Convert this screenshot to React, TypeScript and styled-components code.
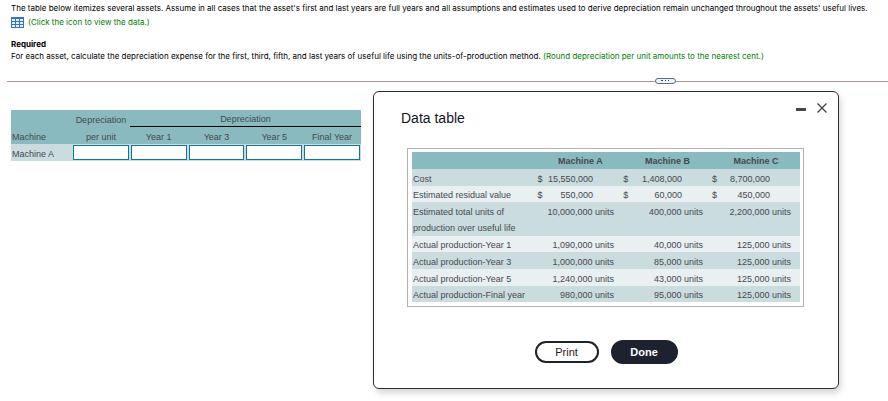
import React from "react";
import styled, { createGlobalStyle } from "styled-components";

const GlobalStyle = createGlobalStyle`
  * { box-sizing: border-box; }
  body {
    margin: 0;
    background: #fff;
    color: #000;
    font-family: "Liberation Sans", Arial, sans-serif;
    font-size: 9px;
    line-height: 12px;
  }
`;

const Page = styled.main`
  display: flex;
  flex-direction: column;
`;

const Problem = styled.section`
  padding: 2px 0 0 11px;
  font-family: Inter, Arial, sans-serif;
  font-size: 8px;
  white-space: nowrap;
`;

const Paragraph = styled.p`
  margin: 0;
`;

const DataLink = styled.a`
  display: flex;
  align-items: center;
  gap: 4px;
  height: 16px;
  color: #008000;
  text-decoration: none;
`;

const RequiredHeading = styled.h2`
  margin: 9px 0 0;
  font-size: 8px;
  line-height: 11px;
  font-weight: bold;
`;

const Note = styled.span`
  color: #008000;
`;

const Divider = styled.div`
  display: flex;
  align-items: center;
  height: 8px;
  margin: 15px 0 0 7px;
`;

const Rule = styled.span<{ $grow: number }>`
  flex: ${(p) => p.$grow} 1 0;
  height: 1px;
  background: #b3939b;
`;

const Handle = styled.button`
  display: flex;
  align-items: center;
  justify-content: center;
  width: 21px;
  height: 6px;
  padding: 0;
  border: 1px solid #5b6f85;
  border-radius: 3px;
  background: #eef3f8;
`;

const Workspace = styled.div`
  display: flex;
  align-items: flex-start;
  gap: 12px;
  padding: 6px 49px 12px 11px;
`;

const AnswerTable = styled.table`
  flex: none;
  width: 350px;
  margin-top: 19px;
  border-collapse: collapse;
  table-layout: fixed;
  font-size: 9px;
  line-height: 14px;
  color: #45494f;
`;

const LabelCol = styled.col`
  width: 61px;
`;

const AnswerHead = styled.th<{ $align?: string; $ruled?: boolean }>`
  height: 17px;
  padding: ${(p) => (p.$ruled ? "2px 1px 1px" : "3px 1px 0")};
  font-weight: normal;
  text-align: ${(p) => p.$align ?? "center"};
  background: #88babf;
  box-shadow: ${(p) => (p.$ruled ? "inset 0 -1px #000" : "none")};
`;

const AnswerLabel = styled.th`
  height: 17px;
  padding: 3px 1px 0;
  font-weight: normal;
  text-align: left;
  background: #cbdcde;
`;

const AnswerCell = styled.td`
  height: 17px;
  padding: 1px;
  background: #cbdcde;
`;

const AnswerInput = styled.input`
  display: block;
  width: 100%;
  height: 15px;
  padding: 0 2px;
  border: 1px solid #087a9b;
  border-radius: 0;
  background: #fff;
  font: inherit;
`;

const Dialog = styled.section`
  flex: 1;
  min-width: 0;
  padding: 9px 10px 24px 27px;
  border: 1px solid #2c2d30;
  border-radius: 6px;
  background: #fff;
  box-shadow: 2px 4px 6px rgba(0, 0, 0, 0.16);
`;

const TitleBar = styled.header`
  display: flex;
  justify-content: space-between;
`;

const Title = styled.h1`
  margin: 8px 0 0;
  font-size: 14px;
  line-height: 18px;
  font-weight: normal;
  color: #14151f;
`;

const WindowControls = styled.div`
  display: flex;
  gap: 10px;
  height: 14px;
`;

const IconButton = styled.button`
  display: flex;
  align-items: center;
  padding: 0;
  border: 0;
  background: none;
  color: #42474f;
`;

const Frame = styled.div`
  margin: 21px 24px 0 6px;
  padding: 3px 3px 4px 4px;
  border: 1px solid #b4b4b4;
`;

const DataTable = styled.table`
  width: 100%;
  border-collapse: collapse;
  font-size: 9px;
  line-height: 14px;
  color: #45494f;
`;

const Col = styled.col<{ $w: number }>`
  width: ${(p) => p.$w}px;
`;

const MachineHead = styled.th`
  height: 17px;
  padding: 1px 0;
  background: #88babf;
`;

const DataRow = styled.tr<{ $height: number }>`
  height: ${(p) => p.$height}px;
  background: #cbdcde;
  &:nth-child(even) { background: #e8f0f2; }
`;

const RowLabel = styled.th<{ $tall: boolean }>`
  padding: 2px 0 0 1px;
  line-height: ${(p) => (p.$tall ? 16 : 14)}px;
  font-weight: normal;
  text-align: left;
  vertical-align: bottom;
`;

const Currency = styled.td`
  padding: 2px 0 0;
  vertical-align: bottom;
`;

const Amount = styled.td<{ $money: boolean; $tall: boolean }>`
  padding: 2px ${(p) => (p.$money ? 30 : 9)}px 0 0;
  line-height: ${(p) => (p.$tall ? 16 : 14)}px;
  text-align: right;
  vertical-align: ${(p) => (p.$tall ? "top" : "bottom")};
  white-space: nowrap;
`;

const Actions = styled.footer`
  display: flex;
  align-items: center;
  justify-content: center;
  gap: 12px;
  margin-top: 33px;
  padding-right: 17px;
`;

const ActionButton = styled.button<{ $primary?: boolean }>`
  width: ${(p) => (p.$primary ? 67 : 64)}px;
  height: ${(p) => (p.$primary ? 24 : 22)}px;
  padding: 0;
  border: 2px solid #1d222e;
  border-radius: 12px;
  background: ${(p) => (p.$primary ? "#1d222e" : "#fff")};
  color: ${(p) => (p.$primary ? "#fff" : "#1d222e")};
  font-family: inherit;
  font-size: 11px;
  line-height: 16px;
  font-weight: ${(p) => (p.$primary ? "bold" : "normal")};
`;

const periods = ["Year 1", "Year 3", "Year 5", "Final Year"];

type Row = { label: React.ReactNode; money?: boolean; height: number; values: string[] };

const rows: Row[] = [
  { label: "Cost", money: true, height: 17, values: ["15,550,000", "1,408,000", "8,700,000"] },
  { label: "Estimated residual value", money: true, height: 16, values: ["550,000", "60,000", "450,000"] },
  {
    label: <>Estimated total units of<br />production over useful life</>,
    height: 34,
    values: ["10,000,000", "400,000", "2,200,000"],
  },
  { label: "Actual production-Year 1", height: 16, values: ["1,090,000", "40,000", "125,000"] },
  { label: "Actual production-Year 3", height: 17, values: ["1,000,000", "85,000", "125,000"] },
  { label: "Actual production-Year 5", height: 17, values: ["1,240,000", "43,000", "125,000"] },
  { label: "Actual production-Final year", height: 16, values: ["980,000", "95,000", "125,000"] },
];

const GridIcon = () => (
  <svg width="13" height="11" viewBox="0 0 13 11" aria-hidden="true">
    <rect width="13" height="11" fill="#2f74d0" />
    <path
      fill="#e9f2fd"
      d="M1 2h3v2H1zM5 2h3v2H5zM9 2h3v2H9zM1 5h3v2H1zM5 5h3v2H5zM9 5h3v2H9zM1 8h3v2H1zM5 8h3v2H5zM9 8h3v2H9z"
    />
  </svg>
);

export default function App() {
  return (
    <>
      <GlobalStyle />
      <Page>
        <Problem>
          <Paragraph>
            The table below itemizes several assets. Assume in all cases that the asset's first and last years are full
            years and all assumptions and estimates used to derive depreciation remain unchanged throughout the assets'
            useful lives.
          </Paragraph>
          <DataLink href="#data-table">
            <GridIcon />
            (Click the icon to view the data.)
          </DataLink>
          <RequiredHeading>Required</RequiredHeading>
          <Paragraph>
            For each asset, calculate the depreciation expense for the first, third, fifth, and last years of useful
            life using the units-of-production method.{" "}
            <Note>(Round depreciation per unit amounts to the nearest cent.)</Note>
          </Paragraph>
        </Problem>

        <Divider>
          <Rule $grow={648} />
          <Handle type="button" aria-label="Resize panels">
            <svg width="9" height="2" viewBox="0 0 9 2" fill="#42474f">
              <path d="M0 0h2v1H0zM4 0h1v1H4zM7 0h1v1H7z" />
            </svg>
          </Handle>
          <Rule $grow={212} />
        </Divider>

        <Workspace>
          <AnswerTable>
            <colgroup>
              <LabelCol />
              <col span={5} />
            </colgroup>
            <thead>
              <tr>
                <AnswerHead />
                <AnswerHead>Depreciation</AnswerHead>
                <AnswerHead colSpan={4} $ruled>Depreciation</AnswerHead>
              </tr>
              <tr>
                <AnswerHead $align="left">Machine</AnswerHead>
                <AnswerHead>per unit</AnswerHead>
                {periods.map((p) => (
                  <AnswerHead key={p}>{p}</AnswerHead>
                ))}
              </tr>
            </thead>
            <tbody>
              <tr>
                <AnswerLabel scope="row">Machine A</AnswerLabel>
                {["Depreciation per unit", ...periods].map((p) => (
                  <AnswerCell key={p}>
                    <AnswerInput type="text" aria-label={`Machine A, ${p}`} />
                  </AnswerCell>
                ))}
              </tr>
            </tbody>
          </AnswerTable>

          <Dialog role="dialog" aria-labelledby="data-table">
            <TitleBar>
              <Title id="data-table">Data table</Title>
              <WindowControls>
                <IconButton type="button" aria-label="Minimize">
                  <svg width="10" height="10" viewBox="0 0 10 10">
                    <path d="M0 5h10v3H0z" fill="currentColor" />
                  </svg>
                </IconButton>
                <IconButton type="button" aria-label="Close">
                  <svg width="12" height="12" viewBox="0 0 12 12" fill="none" stroke="currentColor" strokeWidth="1.4">
                    <path d="M1.5 1.5l9 9M10.5 1.5l-9 9" />
                  </svg>
                </IconButton>
              </WindowControls>
            </TitleBar>

            <Frame>
              <DataTable>
                <colgroup>
                  <Col $w={126} />
                  <Col $w={10} />
                  <Col $w={75} />
                  <Col $w={10} />
                  <Col $w={79} />
                  <Col $w={10} />
                  <Col $w={78} />
                </colgroup>
                <thead>
                  <tr>
                    <MachineHead />
                    <MachineHead colSpan={2} scope="col">Machine A</MachineHead>
                    <MachineHead colSpan={2} scope="col">Machine B</MachineHead>
                    <MachineHead colSpan={2} scope="col">Machine C</MachineHead>
                  </tr>
                </thead>
                <tbody>
                  {rows.map((row, i) => (
                    <DataRow key={i} $height={row.height}>
                      <RowLabel scope="row" $tall={row.height > 17}>{row.label}</RowLabel>
                      {row.values.map((v, j) => (
                        <React.Fragment key={j}>
                          <Currency>{row.money ? "$" : ""}</Currency>
                          <Amount $money={!!row.money} $tall={row.height > 17}>
                            {row.money ? v : `${v} units`}
                          </Amount>
                        </React.Fragment>
                      ))}
                    </DataRow>
                  ))}
                </tbody>
              </DataTable>
            </Frame>

            <Actions>
              <ActionButton type="button">Print</ActionButton>
              <ActionButton type="button" $primary>Done</ActionButton>
            </Actions>
          </Dialog>
        </Workspace>
      </Page>
    </>
  );
}
